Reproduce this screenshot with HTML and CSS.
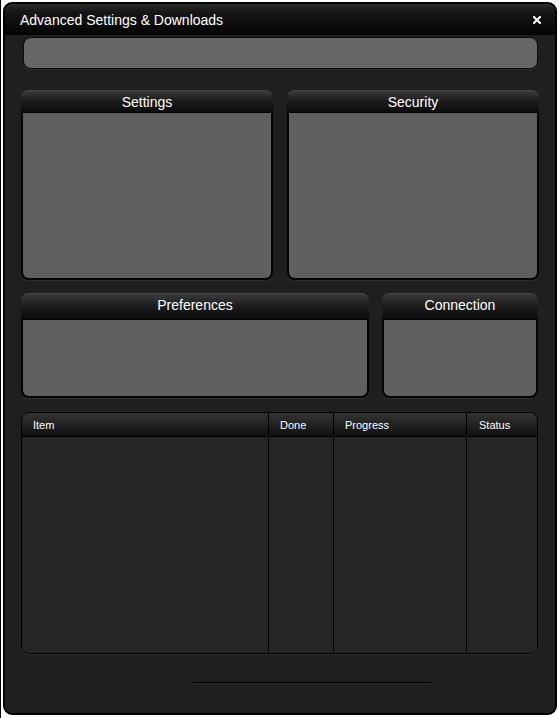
FILE: index.html
```html
<!DOCTYPE html>
<html>
<head>
<meta charset="utf-8">
<link rel="stylesheet" href="styles.css">
</head>
<body>
<div class="window">
  <div class="titlebar">
    <span class="title">Advanced Settings &amp; Downloads</span>
    <svg class="close" width="8" height="8" viewBox="0 0 8 8"><path d="M1 1 L7 7 M7 1 L1 7" stroke="#fff" stroke-width="2" stroke-linecap="square"/></svg>
  </div>
  <div class="content">
    <div class="field"></div>
    <div class="row row1">
      <div class="panel"><div class="phead h22">Settings</div><div class="pbody"></div></div>
      <div class="panel"><div class="phead h22">Security</div><div class="pbody"></div></div>
    </div>
    <div class="row row2">
      <div class="panel"><div class="phead h26">Preferences</div><div class="pbody"></div></div>
      <div class="panel"><div class="phead h26">Connection</div><div class="pbody"></div></div>
    </div>
    <div class="table">
      <div class="col c1"><div class="th">Item</div><div class="td"></div></div>
      <div class="col c2"><div class="th">Done</div><div class="td"></div></div>
      <div class="col c3"><div class="th">Progress</div><div class="td"></div></div>
      <div class="col c4"><div class="th">Status</div><div class="td"></div></div>
    </div>
    <div class="divider"></div>
  </div>
</div>
</body>
</html>
```
FILE: styles.css
```css
html, body { margin: 0; padding: 0; }
body {
  background: #fff;
  width: 559px;
  height: 718px;
  overflow: hidden;
  border-left: 1px solid #000;
  box-sizing: border-box;
  font-family: "Liberation Sans", Arial, sans-serif;
}
.window {
  margin: 2px 2px 0 2px;
  height: 713px;
  box-sizing: border-box;
  border: 2px solid #000;
  border-radius: 9px;
  background: #1f1f1f;
  overflow: hidden;
}
.titlebar {
  height: 30px;
  border-bottom: 1px solid #000;
  background: linear-gradient(#2a2a2a 0%, #151515 30%, #050505 100%);
  display: flex;
  align-items: center;
  justify-content: space-between;
  padding: 0 14px 0 15px;
}
.title { color: #fff; font-size: 14px; padding-top: 1px; }
.close { display: block; margin-top: 1px; }
.content { padding: 0 15px 0 16px; }
.field {
  margin: 2px 2px 0 2px;
  height: 32px;
  box-sizing: border-box;
  border: 1px solid #0a0a0a;
  border-radius: 8px;
  background: #666;
  box-shadow: 0 1px 0 #2c2c2c;
}
.row { display: grid; }
.row1 { margin-top: 21px; grid-template-columns: 252px 252px; column-gap: 14px; height: 190px; }
.row2 { margin-top: 13px; grid-template-columns: 348px 156px; column-gap: 13px; height: 105px; }
.panel {
  display: flex;
  flex-direction: column;
  background: #050505;
  border-radius: 7px;
  padding: 0 2px 2px 2px;
  box-shadow: 0 1px 0 #2e2e2e;
}
.phead {
  margin: 0 -2px;
  border-radius: 7px 7px 0 0;
  background: linear-gradient(#3a3a3a 0%, #1e1e1e 45%, #0b0b0b 100%);
  border-top: 1px solid #464646;
  border-bottom: 1px solid #000;
  color: #fff;
  font-size: 14px;
  text-align: center;
  display: flex;
  align-items: center;
  justify-content: center;
  box-sizing: border-box;
}
.h22 { height: 23px; }
.h26 { height: 27px; padding-bottom: 3px; }
.pbody {
  flex: 1;
  background: #5f5f5f;
  border-radius: 0 0 6px 6px;
}
.table {
  margin-top: 14px;
  width: 517px;
  height: 242px;
  box-sizing: border-box;
  border: 1px solid #000;
  border-radius: 8px;
  display: flex;
  overflow: hidden;
  background: #252525;
  box-shadow: 0 1px 0 #2e2e2e;
}
.col { display: flex; flex-direction: column; }
.c1 { width: 246px; }
.c2 { width: 64px; }
.c3 { width: 132px; }
.c4 { flex: 1; }
.col + .col { border-left: 1px solid #000; }
.th {
  height: 24px;
  box-sizing: border-box;
  border-bottom: 1px solid #000;
  background: linear-gradient(#333 0%, #222 50%, #0f0f0f 100%);
  color: #fff;
  font-size: 11px;
  padding: 6px 0 0 11px;
}
.c4 .th { padding-left: 12px; }
.td { flex: 1; background: #252525; }
.divider {
  margin: 28px 0 0 172px;
  width: 238px;
  height: 1px;
  background: #000;
  box-shadow: 0 1px 0 #2a2a2a;
}
```
